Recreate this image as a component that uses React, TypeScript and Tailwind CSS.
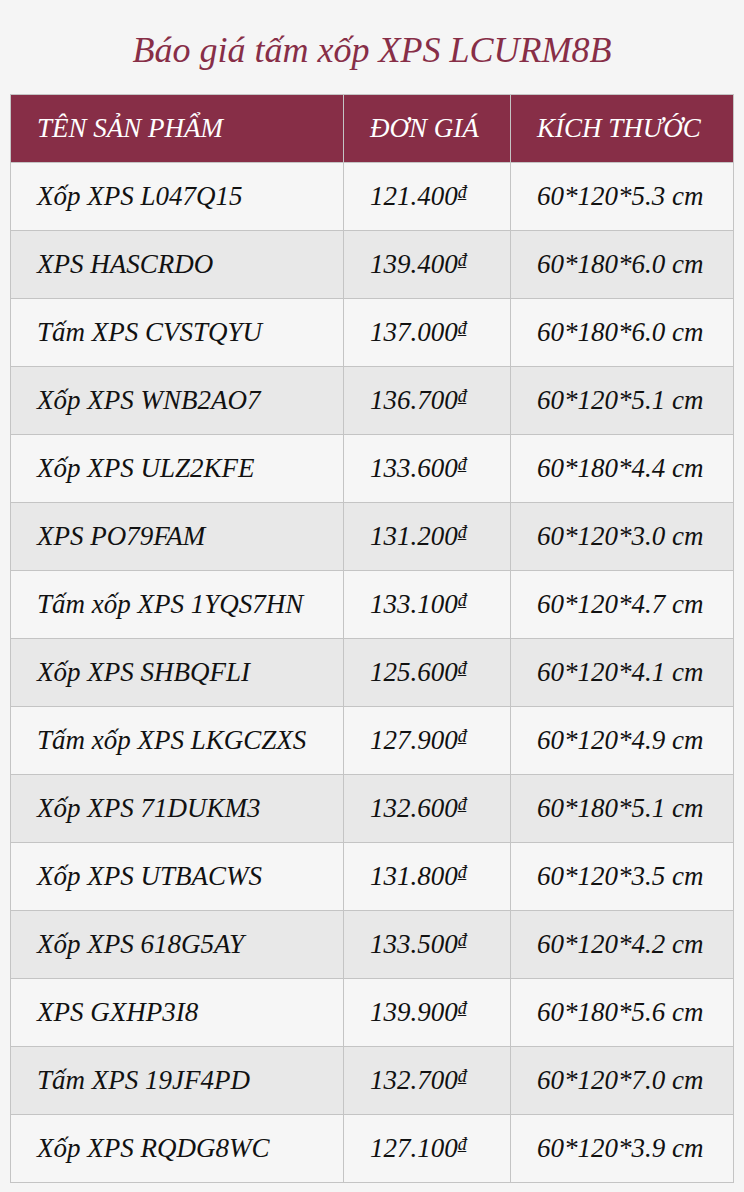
const rows = [
  { name: "Xốp XPS L047Q15", price: "121.400", size: "60*120*5.3 cm" },
  { name: "XPS HASCRDO", price: "139.400", size: "60*180*6.0 cm" },
  { name: "Tấm XPS CVSTQYU", price: "137.000", size: "60*180*6.0 cm" },
  { name: "Xốp XPS WNB2AO7", price: "136.700", size: "60*120*5.1 cm" },
  { name: "Xốp XPS ULZ2KFE", price: "133.600", size: "60*180*4.4 cm" },
  { name: "XPS PO79FAM", price: "131.200", size: "60*120*3.0 cm" },
  { name: "Tấm xốp XPS 1YQS7HN", price: "133.100", size: "60*120*4.7 cm" },
  { name: "Xốp XPS SHBQFLI", price: "125.600", size: "60*120*4.1 cm" },
  { name: "Tấm xốp XPS LKGCZXS", price: "127.900", size: "60*120*4.9 cm" },
  { name: "Xốp XPS 71DUKM3", price: "132.600", size: "60*180*5.1 cm" },
  { name: "Xốp XPS UTBACWS", price: "131.800", size: "60*120*3.5 cm" },
  { name: "Xốp XPS 618G5AY", price: "133.500", size: "60*120*4.2 cm" },
  { name: "XPS GXHP3I8", price: "139.900", size: "60*180*5.6 cm" },
  { name: "Tấm XPS 19JF4PD", price: "132.700", size: "60*120*7.0 cm" },
  { name: "Xốp XPS RQDG8WC", price: "127.100", size: "60*120*3.9 cm" },
];

export default function App() {
  return (
    <div className="min-h-[1192px] bg-[#f5f5f5] px-[10px] pt-[28px] italic font-['Liberation_Serif',serif]">
      <h1 className="text-center text-[36px] leading-[44px] text-[#872e47] mb-[22px]">Báo giá tấm xốp XPS LCURM8B</h1>
      <table className="w-full border-collapse text-[27px]">
        <thead>
          <tr className="bg-[#872e47] text-white">
            <th className="h-[68px] w-[333px] border border-[#c4c4c4] px-[26px] text-left font-normal">TÊN SẢN PHẨM</th>
            <th className="h-[68px] w-[167px] border border-[#c4c4c4] px-[26px] text-left font-normal">ĐƠN GIÁ</th>
            <th className="h-[68px] border border-[#c4c4c4] px-[26px] text-left font-normal">KÍCH THƯỚC</th>
          </tr>
        </thead>
        <tbody>
          {rows.map((r, i) => (
            <tr key={r.name} className={i % 2 === 1 ? "bg-[#e8e8e8]" : "bg-[#f6f6f6]"}>
              <td className="h-[68px] border border-[#c4c4c4] px-[26px] text-[#111]">{r.name}</td>
              <td className="h-[68px] border border-[#c4c4c4] px-[26px] text-[#111]">
                {r.price}
                <span className="text-[18px] align-[7px]">₫</span>
              </td>
              <td className="h-[68px] border border-[#c4c4c4] px-[26px] text-[#111]">{r.size}</td>
            </tr>
          ))}
        </tbody>
      </table>
    </div>
  );
}
